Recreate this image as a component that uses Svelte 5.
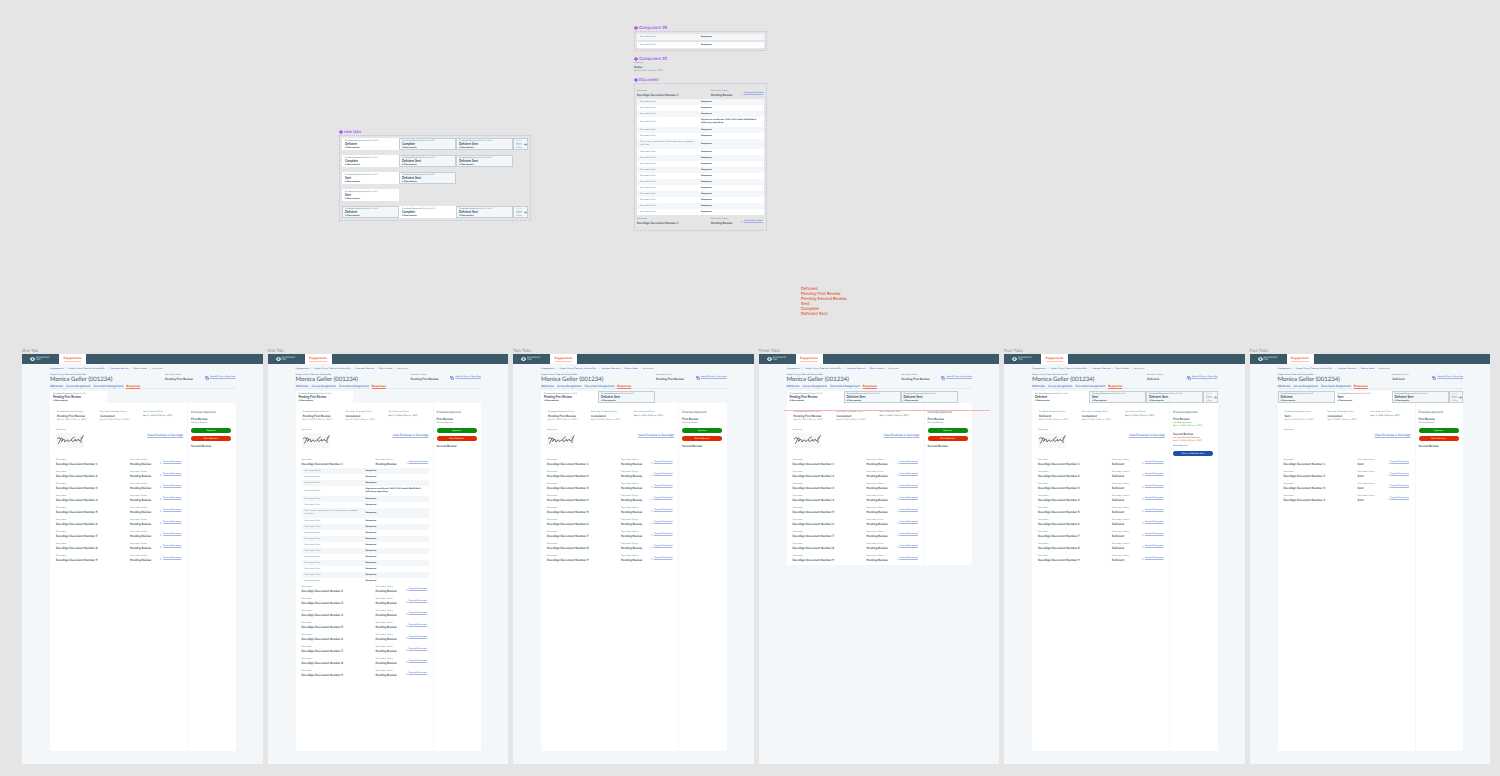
<script lang="ts">
	type Row = { label: string; value: string; tall?: boolean };
	type Tab = { status: string; active?: boolean };
	type Board = {
		name: string;
		status: string;
		tabs: Tab[];
		more?: boolean;
		docs: number;
		docStatus: string;
		envelope: string;
		signed: boolean;
		expanded?: boolean;
		reviewed?: boolean;
		short?: boolean;
	};

	const first = 'Pending First Review';

	const boards: Board[] = [
		{ name: 'One Tab', status: first, envelope: first, tabs: [{ status: first, active: true }], docs: 9, docStatus: 'Pending Review', signed: true },
		{ name: 'One Tab', status: first, envelope: first, tabs: [{ status: first, active: true }], docs: 9, docStatus: 'Pending Review', signed: true, expanded: true },
		{ name: 'Two Tabs', status: first, envelope: first, tabs: [{ status: first, active: true }, { status: 'Deficient Sent' }], docs: 9, docStatus: 'Pending Review', signed: true },
		{ name: 'Three Tabs', status: first, envelope: first, tabs: [{ status: first, active: true }, { status: 'Deficient Sent' }, { status: 'Deficient Sent' }], docs: 9, docStatus: 'Pending Review', signed: true, short: true },
		{ name: 'Four Tabs', status: 'Deficient', envelope: 'Deficient', tabs: [{ status: 'Deficient', active: true }, { status: 'Sent' }, { status: 'Deficient Sent' }], more: true, docs: 9, docStatus: 'Deficient', signed: true, reviewed: true },
		{ name: 'Four Tabs', status: 'Deficient', envelope: 'Sent', tabs: [{ status: 'Deficient' }, { status: 'Sent', active: true }, { status: 'Deficient Sent' }], more: true, docs: 4, docStatus: 'Sent', signed: false }
	];

	const tabSets: { tabs: Tab[]; more?: boolean }[] = [
		{ tabs: [{ status: 'Deficient', active: true }, { status: 'Complete' }, { status: 'Deficient Sent' }], more: true },
		{ tabs: [{ status: 'Complete', active: true }, { status: 'Deficient Sent' }, { status: 'Deficient Sent' }] },
		{ tabs: [{ status: 'Sent', active: true }, { status: 'Deficient Sent' }] },
		{ tabs: [{ status: 'Sent', active: true }] },
		{ tabs: [{ status: 'Deficient' }, { status: 'Complete', active: true }, { status: 'Deficient Sent' }], more: true }
	];

	const rows: Row[] = Array.from({ length: 18 }, () => ({ label: 'Document Data', value: 'Response' }));
	rows[3] = { label: 'Document Data', value: 'Signature certificate 2004-1442-abb2-8bb0f9bc0 following regarding', tall: true };
	rows[6] = { label: 'This is how it would look if the broker was wrapped to two lines', value: 'Response', tall: true };

	const statuses = ['Deficient', 'Pending First Review', 'Pending Second Review', 'Sent', 'Complete', 'Deficient Sent'];
	const crumbs = ['Engagements', 'Project Clancy Tree with Antonio Mo...', 'Recipient Records', 'Monica Geller'];
	const sections = ['Attributes', 'Group Assignment', 'Document Assignment', 'Responses'];
</script>

{#snippet mark()}
	<svg class="mark" viewBox="0 0 10 10" aria-hidden="true">
		<path d="M5 0 7.2 2.2 5 4.4 2.8 2.2zM5 5.6 7.2 7.8 5 10 2.8 7.8zM0 5 2.2 2.8 4.4 5 2.2 7.2zM5.6 5 7.8 2.8 10 5 7.8 7.2z" />
	</svg>
{/snippet}

{#snippet tabBar(tabs: Tab[], more?: boolean)}
	<div class="tabs">
		{#each tabs as tab, i}
			<button class="tab" class:active={tab.active}>
				<span>Envelope Response Status {i + 1} of {more ? 4 : tabs.length}</span>
				<strong>{tab.status}</strong>
				<b>6 Documents</b>
			</button>
		{/each}
		{#if more}
			<button class="tab more" aria-label="More tabs">
				<span>Envel</span>
				<strong>Sent</strong>
				<b>6 Doc</b>
				<svg viewBox="0 0 6 6"><path d="M0 3h5M3 1l2 2-2 2" /></svg>
			</button>
		{/if}
	</div>
{/snippet}

{#snippet docHead(n: number, status: string, open?: boolean)}
	<div class="doc">
		<div><span>Document</span><strong>DocuSign Document Number {n}</strong></div>
		<div><span>Document Status</span><strong>{status}</strong></div>
		<a href="#doc-{n}">
			<svg viewBox="0 0 4 4"><path d={open ? 'M0 2h4' : 'M1 0h2M2 0v4M1 4h2'} /></svg>
			<u>{open ? 'Collapse Document' : 'Expand Document'}</u>
		</a>
	</div>
{/snippet}

{#snippet dataTable(items: Row[])}
	<table>
		<tbody>
			{#each items as row}
				<tr class:tall={row.tall}>
					<td>{row.label}</td>
					<td>{row.value}</td>
				</tr>
			{/each}
		</tbody>
	</table>
{/snippet}

<main>
	<section class="component new-tabs">
		<h2>{@render mark()} new tabs</h2>
		<div class="outline">
			{#each tabSets as set}
				{@render tabBar(set.tabs, set.more)}
			{/each}
		</div>
	</section>

	<section class="component row-states">
		<h2>{@render mark()} Component 28</h2>
		<div class="outline">
			{@render dataTable(rows.slice(0, 1))}
			<div class="plain">{@render dataTable(rows.slice(0, 1))}</div>
		</div>
	</section>

	<section class="component signed">
		<h2>{@render mark()} Component 22</h2>
		<div class="fact">
			<span>Labeling</span>
			<strong>Status</strong>
			<span>April 4, 2022 3:15 p.m. (EDT)</span>
		</div>
	</section>

	<section class="component document">
		<h2>{@render mark()} Document</h2>
		<div class="outline">
			{@render docHead(1, 'Pending Review', true)}
			{@render dataTable(rows)}
			{@render docHead(1, 'Pending Review')}
		</div>
	</section>

	<ul class="statuses">
		{#each statuses as status}
			<li>{status}</li>
		{/each}
	</ul>

	<div class="boards">
		{#each boards as board}
			<article class="board">
				<h3>{board.name}</h3>
				<header>
					<div class="logo">
						<svg viewBox="0 0 10 8"><path d="M0 4c2-5 8-5 10 0-2 5-8 5-10 0z" /><circle cx="5" cy="4" r="2" /></svg>
						<span>BROADRIDGE<br />CMG</span>
					</div>
					<a href="#engagements"><span>Engagements</span></a>
				</header>

				<div class="body">
					<nav class="crumbs">
						{#each crumbs as crumb}
							<a href="#crumb">{crumb}</a><i>/</i>
						{/each}
						<span>Responses</span>
					</nav>

					<div class="title">
						<div>
							<span>Project Clancy Tree with Antonio Mo...</span>
							<h1>Monica Geller (001234)</h1>
						</div>
						<div class="state">
							<span>Recipient Status</span>
							<strong>{board.status}</strong>
						</div>
						<a href="#envelopes">
							<svg viewBox="0 0 8 8"><path d="M1 5V1h4v1M3 3h4v4H3z" /></svg>
							<u>View All Envs in DocuSign</u>
						</a>
					</div>

					<nav class="sections">
						{#each sections as section, i}
							<a href="#section" class:current={i === 3}>{section}</a>
						{/each}
					</nav>

					{@render tabBar(board.tabs, board.more)}

					<div class="page" class:short={board.short}>
						<div class="envelope">
							<div class="facts">
								<div class="fact">
									<span>Envelope Response Status</span>
									<strong>{board.envelope}</strong>
									<span>April 4, 2022 3:15 p.m. (EDT)</span>
								</div>
								<div class="fact">
									<span>DocuSign Envelope Status</span>
									<strong>Completed</strong>
									<span>April 4, 2022 3:15 p.m. (EDT)</span>
								</div>
								<div class="fact date">
									<span>Sent Date and Time</span>
									<strong>April 1, 2022 3:15 p.m. (EDT)</strong>
								</div>
							</div>
							<div class="signature">
								<div>
									<span>Signature</span>
									{#if board.signed}
										<svg viewBox="0 0 84 45" aria-label="Signature">
											<path d="M3 18c3-4 8-5 10-2 2 3-3 10-6 16M13 18c3-4 7-3 6 1l-2 6c3-6 8-7 9-4s-2 5 1 5c4 0 4-6 7-5s1 5 4 4 3-4 6-4M56 12c-7 2-12 8-9 12s10-3 12-5c1 3-1 6 2 5s3-5 6-5 0 5 3 4 4-5 6-3c-2 3-1 6-1 10M75 13l2 4 5-10" />
										</svg>
									{/if}
								</div>
								<a href="#docusign">View Envelope in DocuSign</a>
							</div>
							<div class="docs">
								{#each { length: board.docs } as _, i}
									{@render docHead(i + 1, board.docStatus, board.expanded && i === 0)}
									{#if board.expanded && i === 0}
										{@render dataTable(rows)}
									{/if}
								{/each}
							</div>
						</div>

						<aside>
							<h4>Envelope Approval</h4>
							<strong>First Review</strong>
							{#if board.reviewed}
								<p class="ok">Lab Rep Approved<br />April 1, 2022 3:15 p.m. (EDT)</p>
								<strong>Second Review</strong>
								<p class="bad">Lab Pond Marked Deficient<br />April 1, 2022 3:15 p.m. (EDT)</p>
								<a href="#approval">Undo Approval</a>
								<button class="send">Mark as Deficient Sent</button>
							{:else}
								<p>Pending Review</p>
								<button class="approve">Approve</button>
								<button class="reject">Mark Deficient</button>
								<strong>Second Review</strong>
							{/if}
						</aside>
					</div>
				</div>
				{#if board.short}
					<div class="guide"></div>
				{/if}
			</article>
		{/each}
	</div>
</main>

<style>
	:global(body) {
		background: #e5e5e5;
	}
	main {
		position: relative;
		min-height: 100vh;
		overflow: hidden;
		font: 2px/3px 'DejaVu Sans', sans-serif;
		color: #687f8b;
		text-rendering: geometricPrecision;
	}
	main :global(*) {
		box-sizing: border-box;
	}
	h1,
	h2,
	h3,
	h4,
	p,
	ul {
		margin: 0;
		padding: 0;
		font-weight: 400;
	}
	svg {
		fill: none;
		stroke: currentColor;
		flex: none;
	}
	strong {
		font: 700 3px/4px Lato, sans-serif;
		color: #2f4d5c;
	}
	span,
	strong {
		display: block;
		white-space: nowrap;
	}
	a {
		color: #2853bd;
		text-decoration: none;
	}
	u {
		text-decoration-color: #a3b6e4;
	}
	button {
		font: inherit;
		color: inherit;
		border: 0;
		padding: 0;
	}

	/* component sheets on the canvas */
	.component {
		position: absolute;
	}
	.component h2 {
		display: flex;
		align-items: center;
		gap: 1px;
		font: 4px/6px Inter, sans-serif;
		color: #8a18ee;
	}
	.mark {
		width: 4px;
		height: 4px;
		fill: #8a18ee;
		stroke: none;
	}
	.outline {
		border: 1px dotted #c4bbe6;
	}
	.new-tabs {
		left: 339px;
		top: 129px;
		width: 192px;
	}
	.new-tabs .outline {
		display: grid;
		gap: 5px;
		padding: 2px;
	}
	.row-states {
		left: 634px;
		top: 25px;
		width: 133px;
	}
	.row-states .outline {
		display: grid;
		gap: 2px;
		padding: 2px;
	}
	.signed {
		left: 634px;
		top: 56px;
	}
	.document {
		left: 634px;
		top: 77px;
		width: 133px;
	}
	.document .outline {
		padding: 6px 2px 0;
	}
	.statuses {
		position: absolute;
		left: 801px;
		top: 286px;
		list-style: none;
		font: 4px/5px Inter, sans-serif;
		color: #d93305;
	}

	/* boards */
	.boards {
		position: absolute;
		inset: 354px 10px 12px 22px;
		display: grid;
		grid-template-columns: repeat(6, 1fr);
		gap: 5px;
	}
	.board {
		position: relative;
		display: flex;
		flex-direction: column;
		background: #f3f7fa;
		min-width: 0;
	}
	h3 {
		position: absolute;
		left: 0;
		top: -6px;
		font: 4px/6px Inter, sans-serif;
		color: #8c8c8c;
	}
	header {
		display: flex;
		height: 10px;
		background: #3b5968;
	}
	.logo {
		display: flex;
		align-items: center;
		gap: 1px;
		width: 37px;
		padding-left: 8px;
		line-height: 2px;
		color: #dce4e8;
	}
	.logo svg {
		width: 5px;
		height: 4px;
		fill: #fff;
		stroke: none;
	}
	.logo circle {
		fill: #3b5968;
	}
	header a {
		display: flex;
		justify-content: center;
		width: 27px;
		background: #fff;
		color: #f4511e;
		font: 700 3px/6px Lato, sans-serif;
	}
	header a span {
		height: 8px;
		padding-top: 1px;
		border-bottom: 1px solid #fbc5b2;
	}
	.body {
		flex: 1;
		display: flex;
		flex-direction: column;
		padding: 4px 27px 13px 28px;
	}
	.crumbs {
		display: flex;
		gap: 2px;
		margin-bottom: 3px;
		white-space: nowrap;
	}
	.title {
		display: flex;
		align-items: flex-start;
	}
	.title > :first-child {
		width: 115px;
	}
	.title > :first-child span {
		color: #3b5968;
	}
	h1 {
		font: 6px/6px Lato, sans-serif;
		color: #3b5968;
	}
	.state {
		width: 35px;
	}
	.title a {
		display: flex;
		gap: 1px;
		margin: 2px 0 0 auto;
		white-space: nowrap;
	}
	.title a svg {
		width: 4px;
		height: 4px;
	}
	.sections {
		display: flex;
		gap: 3px;
		margin: 1px 0 2px;
		height: 5px;
		border-bottom: 1px solid #e3eaee;
		font: 3px/4px Lato, sans-serif;
	}
	.sections .current {
		color: #e63b0c;
		font-weight: 700;
		height: 5px;
		border-bottom: 1px solid #f07a59;
	}

	.tabs {
		display: flex;
		height: 12px;
	}
	.tab {
		display: flex;
		flex-direction: column;
		width: 57px;
		padding: 1px 3px 0;
		text-align: left;
		background: #f3f7fa;
		box-shadow: inset 0 0 0 1px #c3cfd5;
		white-space: nowrap;
		overflow: hidden;
		color: #5d7480;
	}
	.tab.active {
		background: #fff;
		box-shadow: none;
	}
	.tab b {
		color: #3b5968;
	}
	.tab.more {
		position: relative;
		flex: 1;
		max-width: 15px;
		color: #a6b4bc;
	}
	.more strong,
	.more b {
		color: #a6b4bc;
	}
	.more svg {
		position: absolute;
		right: 1px;
		top: 5px;
		width: 3px;
		height: 3px;
		color: #2450b0;
	}

	.page {
		flex: 1;
		display: flex;
		background: #fff;
	}
	.page.short {
		flex: none;
		height: 162px;
	}
	.envelope {
		flex: none;
		width: 137px;
		padding: 8px 4px 0 6px;
	}
	.facts {
		display: grid;
		grid-template-columns: 43px 43px 1fr;
		padding-left: 1px;
	}
	.fact strong + span {
		margin-top: 1px;
	}
	.date strong {
		font: 2px/4px 'DejaVu Sans', sans-serif;
	}
	.signature {
		display: flex;
		justify-content: space-between;
		height: 30px;
		margin-top: 7px;
	}
	.signature svg {
		display: block;
		width: 28px;
		height: 15px;
		margin-top: 1px;
		background: #f7f7f7;
		color: #222;
		stroke-width: 2;
	}
	.signature a {
		font: 3px/4px Lato, sans-serif;
		text-decoration: underline #a3b6e4;
		margin-top: 4px;
	}
	.doc {
		display: grid;
		grid-template-columns: 74px 30px 1fr;
		height: 12px;
	}
	.doc a {
		display: flex;
		align-items: center;
		gap: 1px;
		height: 7px;
		white-space: nowrap;
	}
	.doc svg {
		width: 2px;
		height: 2px;
		color: #8ea8e0;
	}
	table {
		width: 100%;
		border-collapse: collapse;
		background: #fff;
		color: #687f8b;
	}
	td {
		width: 48%;
		height: 6px;
		padding: 0 3px;
		font-size: 2px;
		line-height: 3px;
	}
	td:last-child {
		width: 52%;
		font-weight: 700;
		color: #3b5968;
	}
	tr:nth-child(odd) {
		background: #f3f7fa;
	}
	.plain tr {
		background: #fff;
	}
	.tall td {
		height: 10px;
	}
	.docs table,
	.document table {
		margin: -3px 0 2px;
	}
	.document table {
		margin-bottom: 3px;
	}

	aside {
		flex: 1;
		padding: 7px 3px 0;
		border-left: 1px solid #f5f8fa;
	}
	h4 {
		font: 3px/4px Lato, sans-serif;
		color: #3b5968;
		margin-bottom: 3px;
	}
	aside p {
		margin-top: 1px;
	}
	aside button {
		display: block;
		width: 40px;
		height: 5px;
		margin: 3px 0;
		border-radius: 3px;
		color: #fff;
		text-align: center;
	}
	.approve {
		background: #0a8a0a;
	}
	.reject {
		background: #dd2c00;
	}
	.send {
		background: #1f4fae;
	}
	.ok {
		color: #35a01c;
		margin-bottom: 4px;
	}
	.bad {
		color: #dd3a0a;
		margin-bottom: 2px;
	}
	.guide {
		position: absolute;
		left: 25px;
		right: 9px;
		top: 56px;
		height: 1px;
		background: #f5b5ad;
	}
</style>
